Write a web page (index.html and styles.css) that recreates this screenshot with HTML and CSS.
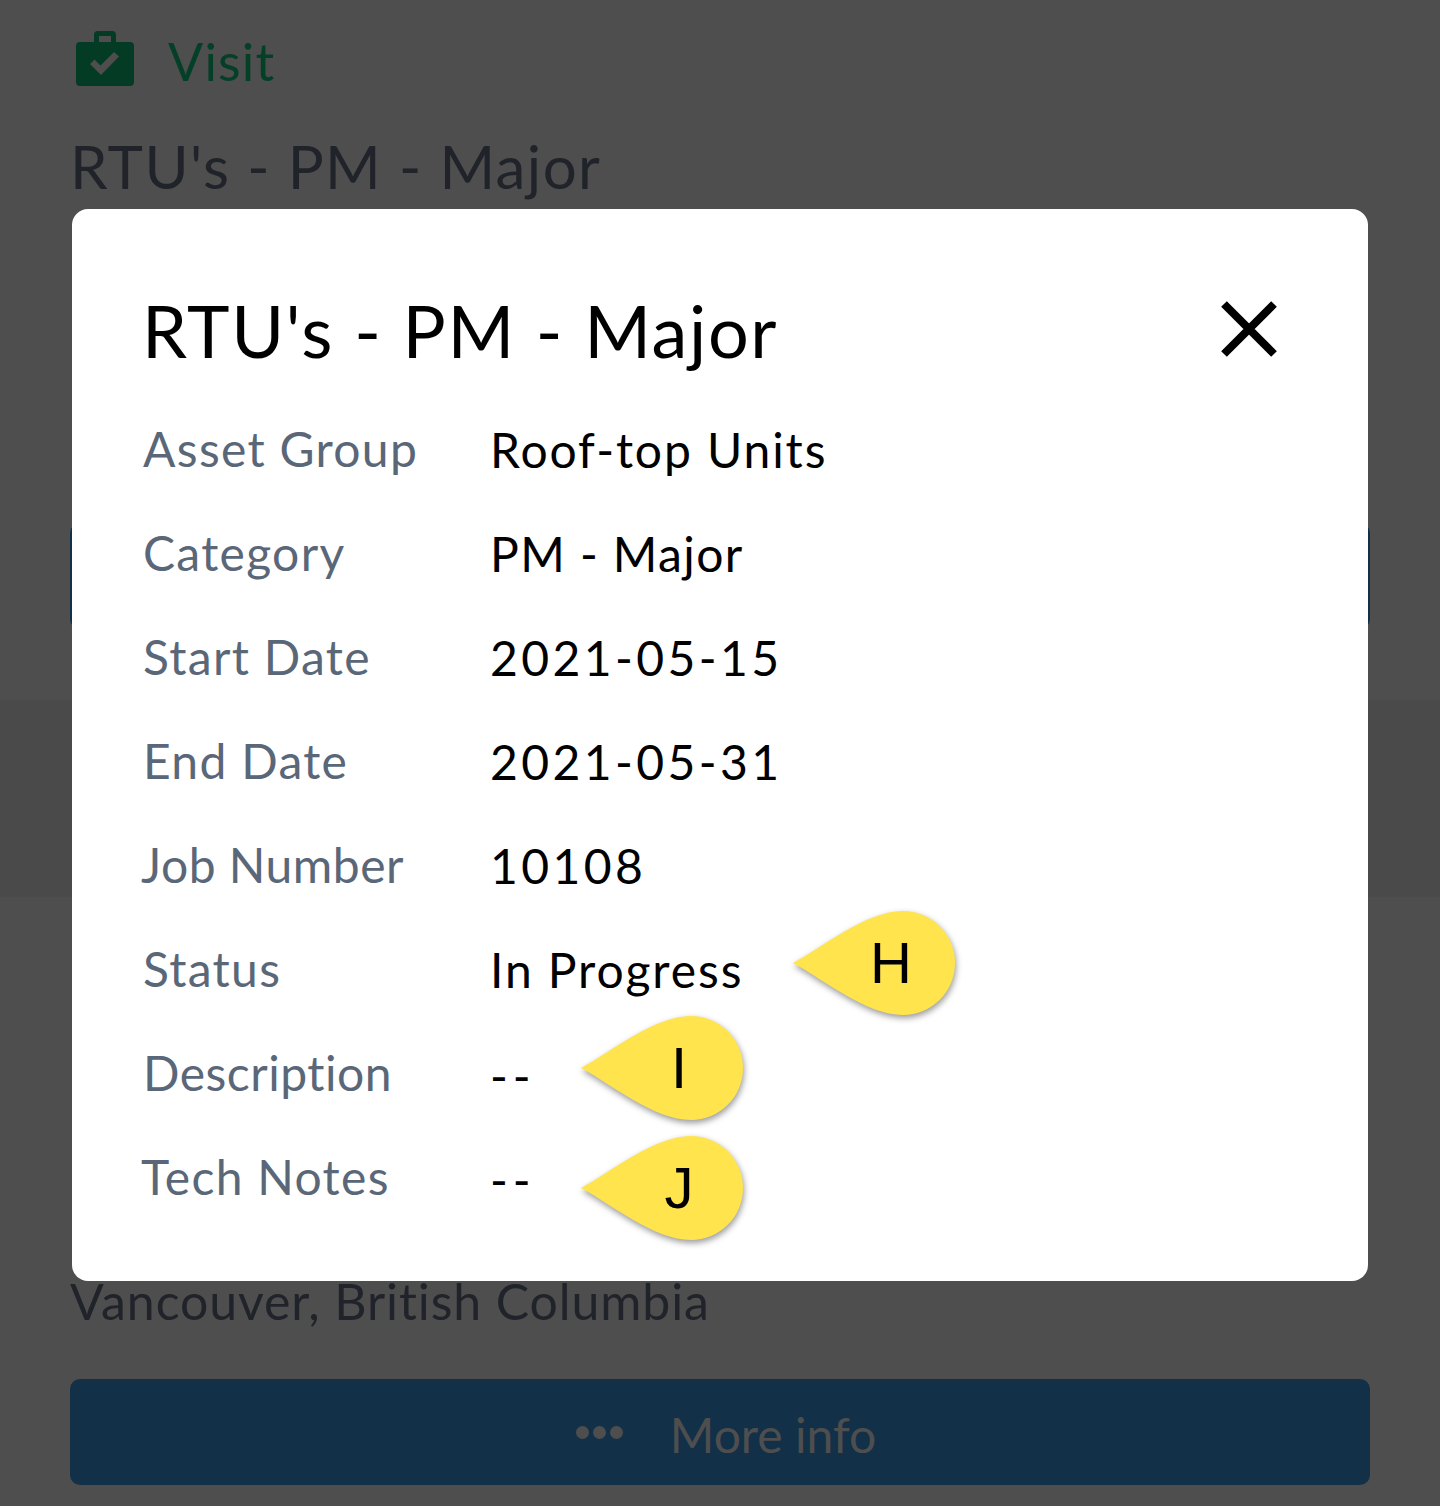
FILE: index.html
```html
<!DOCTYPE html>
<html lang="en">
<head>
<meta charset="utf-8">
<title>RTU's - PM - Major</title>
<link rel="stylesheet" href="styles.css">
</head>
<body>
<main class="page">
  <div class="visit">
    <svg class="visit-icon" viewBox="0 0 58 55" aria-hidden="true">
      <path class="bag" d="M18 11V4a4 4 0 0 1 4-4h14a4 4 0 0 1 4 4v7h14a4 4 0 0 1 4 4v36a4 4 0 0 1-4 4H4a4 4 0 0 1-4-4V15a4 4 0 0 1 4-4zM23 11h12V5H23z"/>
      <path class="tick" d="M14 33l4.500-4.500 6 6L38 21l5 4.500L25 44z"/>
    </svg>
    <span class="visit-label">Visit</span>
  </div>
  <h1 class="job-title">RTU's - PM - Major</h1>
  <div class="top-button"></div>
  <div class="band"></div>
  <p class="location">Vancouver, British Columbia</p>
  <div class="more-button">
    <span class="dots"><i></i><i></i><i></i></span>
    <span class="more-label">More info</span>
  </div>
</main>

<section class="modal">
  <header class="modal-head">
    <h2>RTU's - PM - Major</h2>
    <svg class="close" viewBox="0 0 56 56" aria-label="Close">
      <path d="M3 3l50 50M53 3L3 53"/>
    </svg>
  </header>
  <dl class="details">
    <div class="row"><dt>Asset Group</dt><dd>Roof-top Units</dd></div>
    <div class="row"><dt>Category</dt><dd class="tight">PM - Major</dd></div>
    <div class="row"><dt>Start Date</dt><dd class="num">2021-05-15</dd></div>
    <div class="row"><dt>End Date</dt><dd class="num">2021-05-31</dd></div>
    <div class="row"><dt class="narrow outdent">Job Number</dt><dd class="num">10108</dd></div>
    <div class="row"><dt>Status</dt><dd>In Progress</dd>
      <div class="pin pin-h">
        <svg viewBox="-3 -2 170 114" aria-hidden="true"><path d="M0 52C30 36 73 0 110 0a52 52 0 0 1 0 104C73 104 30 68 0 52z"/></svg>
        <b>H</b>
      </div>
    </div>
    <div class="row"><dt class="narrow">Description</dt><dd class="dash">--</dd>
      <div class="pin pin-i">
        <svg viewBox="-3 -2 170 114" aria-hidden="true"><path d="M0 52C30 36 73 0 110 0a52 52 0 0 1 0 104C73 104 30 68 0 52z"/></svg>
        <b>I</b>
      </div>
    </div>
    <div class="row"><dt class="outdent">Tech Notes</dt><dd class="dash">--</dd>
      <div class="pin pin-j">
        <svg viewBox="-3 -2 170 114" aria-hidden="true"><path d="M0 52C30 36 73 0 110 0a52 52 0 0 1 0 104C73 104 30 68 0 52z"/></svg>
        <b>J</b>
      </div>
    </div>
  </dl>
</section>
</body>
</html>
```
FILE: styles.css
```css
* { box-sizing: border-box; }
html, body { margin: 0; padding: 0; }
body {
  position: relative;
  width: 1440px;
  height: 1506px;
  overflow: hidden;
  background: #4e4e4e;
  font-family: Lato, "Noto Sans", sans-serif;
  color: #000;
}
.page { padding: 31px 70px 0; }
.visit {
  display: flex;
  align-items: center;
  gap: 34px;
  height: 55px;
  padding-left: 6px;
  color: #043f28;
  font-size: 52px;
  letter-spacing: 1.2px;
}
.visit-label { padding-top: 5px; }
.visit-icon { width: 58px; height: 55px; flex: none; }
.bag { fill: #033b24; fill-rule: evenodd; }
.tick { fill: #4e4e4e; }
.job-title {
  margin: 47px 0 0;
  height: 62px;
  font-size: 60px;
  line-height: 66px;
  font-weight: 400;
  letter-spacing: 1.4px;
  color: #20242a;
}
.top-button {
  margin-top: 328px;
  height: 106px;
  border-radius: 10px;
  background: #123149;
}
.band {
  margin: 71px -70px 0;
  height: 197px;
  background: #4a4a4a;
}
.location {
  margin: 374px 0 0;
  height: 58px;
  font-size: 50px;
  line-height: 60px;
  letter-spacing: 0.9px;
  color: #20242a;
}
.more-button {
  display: flex;
  align-items: center;
  justify-content: center;
  gap: 47px;
  margin-top: 50px;
  height: 106px;
  padding-left: 12px;
  border-radius: 10px;
  background: #123149;
  color: #4e4e4e;
  font-size: 48px;
}
.more-label { padding-top: 4px; }
.dots { display: flex; gap: 4px; }
.dots i { width: 13px; height: 13px; border-radius: 50%; background: #4e4e4e; }

.modal {
  position: absolute;
  left: 72px;
  top: 209px;
  width: 1296px;
  height: 1072px;
  padding: 72px 72px 0;
  border-radius: 16px;
  background: #fff;
}
.modal-head { display: flex; justify-content: space-between; align-items: center; height: 100px; }
.modal-head h2 { margin: -2px 0 0 -2px; font-size: 72px; line-height: 100px; font-weight: 400; letter-spacing: 1.6px; }
.close { width: 56px; height: 56px; margin: -4px 19px 0 0; flex: none; }
.close path { stroke: #000; stroke-width: 8; fill: none; }
.details { margin: 38px 0 0; }
.row { position: relative; display: grid; grid-template-columns: 346px 1fr; height: 104px; font-size: 48px; line-height: 60px; }
.row dt { margin-left: -1px; color: #5a6778; letter-spacing: 1.3px; }
.row dt.narrow { letter-spacing: 0.5px; }
.row dt.outdent { margin-left: -3px; }
.row dd { margin: 0; padding-top: 1px; letter-spacing: 1.9px; }
.row dd.tight { letter-spacing: 1.4px; }
.row dd.num { letter-spacing: 3.4px; }
.row dd.dash { padding-top: 3px; letter-spacing: 5px; }
.pin { position: absolute; width: 170px; height: 114px; }
.pin svg { display: block; width: 170px; height: 114px; overflow: visible; filter: drop-shadow(1px 3px 3px rgba(0,0,0,.4)); }
.pin path { fill: #ffe44d; }
.pin b {
  position: absolute;
  left: 0;
  top: 0;
  width: 100%;
  padding-left: 32px;
  text-align: center;
  font: 400 58px/108px "Liberation Sans", sans-serif;
}
.pin-h { left: 646px; top: -30px; }
.pin-i { left: 434px; top: -29px; }
.pin-j { left: 434px; top: -13px; }
```
